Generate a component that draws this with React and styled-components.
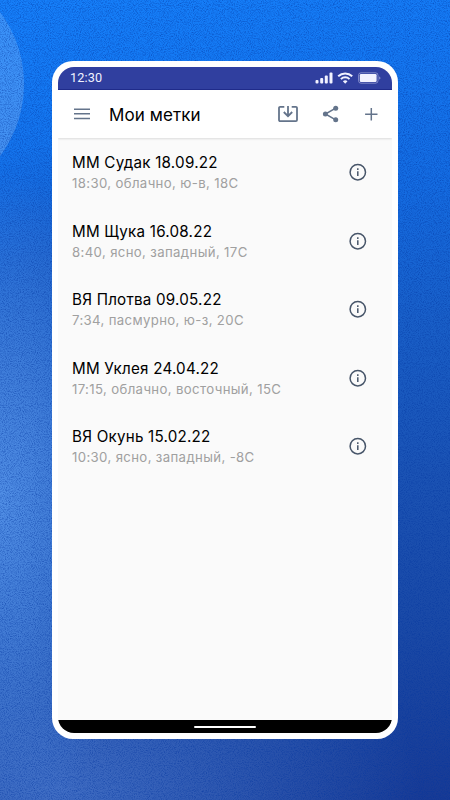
import React from 'react';
import styled, { createGlobalStyle } from 'styled-components';

const GlobalStyle = createGlobalStyle`
  * {
    box-sizing: border-box;
  }
  body {
    margin: 0;
    font-family: Inter, "Liberation Sans", sans-serif;
  }
`;

const Page = styled.main`
  position: relative;
  width: 450px;
  height: 800px;
  padding: 61px 52px;
  overflow: hidden;
  background:
    radial-gradient(ellipse 150px 330px at 0 500px, rgba(84, 146, 232, 0.95), rgba(76, 136, 224, 0.75) 40%, rgba(66, 124, 214, 0) 100%),
    radial-gradient(ellipse 360px 210px at 60px 790px, rgba(68, 114, 200, 0.9), rgba(50, 92, 180, 0) 100%),
    radial-gradient(ellipse 130px 130px at 70px 270px, rgba(32, 84, 180, 0.5), rgba(32, 84, 180, 0) 100%),
    linear-gradient(172deg, #1680fa 0%, #1478f2 12%, #146ce2 28%, #195fc8 44%, #1b53b4 62%, #1a49a6 80%, #183a94 100%);
`;

const Circle = styled.div`
  position: absolute;
  top: -36px;
  left: -216px;
  width: 240px;
  height: 240px;
  border-radius: 50%;
  background: linear-gradient(180deg, rgba(255, 255, 255, 0.14), rgba(255, 255, 255, 0.22));
`;

const Grain = styled.svg`
  position: absolute;
  inset: 0;
  width: 100%;
  height: 100%;
`;

const Phone = styled.div`
  position: relative;
  display: flex;
  width: 346px;
  height: 678px;
  padding: 6px;
  border-radius: 21px;
  background: #fff;
`;

const Screen = styled.div`
  display: flex;
  flex-direction: column;
  flex: 1;
  overflow: hidden;
  border-radius: 16px;
  background: #fafafa;
`;

const StatusBar = styled.div`
  display: flex;
  align-items: center;
  justify-content: space-between;
  height: 23px;
  padding: 0 11px 1px 12px;
  color: #f1f2ff;
  background: #303f9f;
  border-bottom: 1px solid #202c8c;
`;

const Time = styled.span`
  font: 400 12.7px/22px Roboto, sans-serif;
  letter-spacing: 0.15px;
`;

const AppBar = styled.header`
  display: flex;
  align-items: center;
  height: 48px;
  padding: 0 12px 0 16px;
  color: #64748b;
  background: #fff;
  box-shadow: 0 1px 2px rgba(0, 0, 0, 0.12);

  svg {
    flex: none;
  }
`;

const Title = styled.h1`
  flex: 1;
  margin: 0 0 0 19px;
  padding-top: 1px;
  font-size: 17px;
  font-weight: 400;
  line-height: 24px;
  letter-spacing: 0.1px;
  color: #000;
`;

const Actions = styled.div`
  display: flex;
  align-items: center;
  gap: 23.5px;
`;

const List = styled.ul`
  flex: 1;
  margin: 0;
  padding: 0;
  list-style: none;
`;

const Row = styled.li`
  display: flex;
  align-items: center;
  justify-content: space-between;
  height: 68.5px;
  padding: 0 24px 0 14px;
  color: #475569;
`;

const Name = styled.div`
  padding-top: 1px;
  font-size: 15.2px;
  line-height: 21px;
  letter-spacing: 0.22px;
  color: #000;
`;

const Details = styled.div`
  font-size: 13.2px;
  line-height: 20px;
  letter-spacing: 0.36px;
  color: #a0a0a0;
`;

const NavBar = styled.div`
  display: flex;
  align-items: center;
  justify-content: center;
  height: 13px;
  background: #000;
`;

const NavPill = styled.div`
  width: 62px;
  height: 2px;
  border-radius: 1px;
  background: #fff;
`;

const marks = [
  { name: 'ММ Судак 18.09.22', details: '18:30, облачно, ю-в, 18С' },
  { name: 'ММ Щука 16.08.22', details: '8:40, ясно, западный, 17С' },
  { name: 'ВЯ Плотва 09.05.22', details: '7:34, пасмурно, ю-з, 20С' },
  { name: 'ММ Уклея 24.04.22', details: '17:15, облачно, восточный, 15С' },
  { name: 'ВЯ Окунь 15.02.22', details: '10:30, ясно, западный, -8С' },
];

const StatusIcons = () => (
  <svg width="66" height="14" viewBox="0 0 66 14" fill="currentColor">
    <rect x="0.5" y="9" width="3" height="3.5" rx="1" />
    <rect x="5.2" y="7" width="3" height="5.5" rx="1" />
    <rect x="9.8" y="4.5" width="3" height="8" rx="1" />
    <rect x="14.5" y="1.5" width="3" height="11" rx="1" />
    <g fill="none" stroke="currentColor" strokeWidth="2">
      <path d="M23.2 5.2a10.2 10.2 0 0 1 14 0" />
      <path d="M25.9 8.1a6.2 6.2 0 0 1 8.6 0" />
    </g>
    <path d="m30.2 12.7-2.3-2.4a3.4 3.4 0 0 1 4.6 0z" />
    <rect x="43.5" y="1.8" width="19.5" height="10.4" rx="2.5" fill="none" stroke="currentColor" opacity="0.4" />
    <rect x="44.8" y="3" width="16.8" height="8" rx="1.2" />
    <path d="M64.2 5.4v3.2c.9-.3 1.2-.9 1.2-1.6s-.3-1.3-1.2-1.6z" opacity="0.5" />
  </svg>
);

const MenuIcon = () => (
  <svg width="16" height="12" viewBox="0 0 16 12" fill="currentColor">
    <path d="M0 .5h16V2H0zM0 5h16v1.5H0zM0 9.7h16v1.5H0z" />
  </svg>
);

const SaveIcon = () => (
  <svg width="20" height="18" viewBox="0 0 20 18" fill="none" stroke="currentColor" strokeWidth="1.8">
    <path d="M6.3 1.9H2.1A1.1 1.1 0 0 0 1 3v12a1.1 1.1 0 0 0 1.1 1.1h15.8A1.1 1.1 0 0 0 19 15V3a1.1 1.1 0 0 0-1.1-1.1h-4.2M10 1v9.8M5.8 7l4.2 4.2L14.2 7" />
  </svg>
);

const ShareIcon = () => (
  <svg width="17" height="18" viewBox="0 0 17 18" fill="currentColor">
    <path d="M13.7 3.2 3.4 9l10.3 5.8" fill="none" stroke="currentColor" strokeWidth="1.5" />
    <circle cx="13.7" cy="3.3" r="2.5" />
    <circle cx="3.4" cy="9" r="2.5" />
    <circle cx="13.7" cy="14.7" r="2.5" />
  </svg>
);

const PlusIcon = () => (
  <svg width="18" height="18" viewBox="0 0 18 18" stroke="currentColor" strokeWidth="1.5">
    <path d="M9.3 3v12.4M3.1 9.2h12.4" />
  </svg>
);

const InfoIcon = () => (
  <svg width="20" height="20" viewBox="0 0 20 20" fill="none" stroke="currentColor" strokeWidth="1.5">
    <circle cx="9.8" cy="10.2" r="7.7" />
    <path d="M9.8 9.2v4.7M9.8 6.2v1.7" />
  </svg>
);

const App = () => (
  <>
    <GlobalStyle />
    <Page>
      <Circle />
      <Grain aria-hidden="true">
        <filter id="grain" x="0" y="0" width="100%" height="100%" colorInterpolationFilters="sRGB">
          <feTurbulence type="fractalNoise" baseFrequency="0.93" numOctaves="3" seed="7" />
          <feColorMatrix values="0 0 0 0 0  0 0 0 0 0.2  0 0 0 0 0.62  1.1 0 0 0 -0.45" />
        </filter>
        <rect width="100%" height="100%" filter="url(#grain)" />
      </Grain>
      <Phone>
        <Screen>
          <StatusBar>
            <Time>12:30</Time>
            <StatusIcons />
          </StatusBar>
          <AppBar>
            <MenuIcon />
            <Title>Мои метки</Title>
            <Actions>
              <SaveIcon />
              <ShareIcon />
              <PlusIcon />
            </Actions>
          </AppBar>
          <List>
            {marks.map((mark) => (
              <Row key={mark.name}>
                <div>
                  <Name>{mark.name}</Name>
                  <Details>{mark.details}</Details>
                </div>
                <InfoIcon />
              </Row>
            ))}
          </List>
          <NavBar>
            <NavPill />
          </NavBar>
        </Screen>
      </Phone>
    </Page>
  </>
);

export default App;
